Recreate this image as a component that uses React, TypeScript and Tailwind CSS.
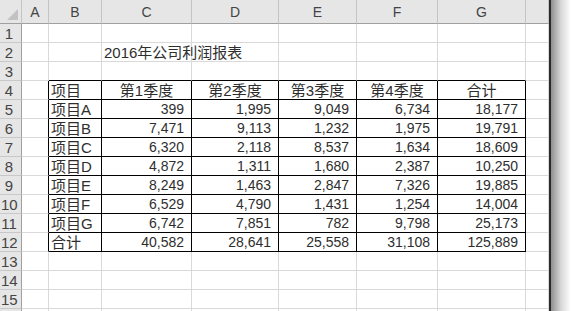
import React from "react";

const colLetters = ["", "A", "B", "C", "D", "E", "F", "G", ""];

const table: string[][] = [
  ["项目", "第1季度", "第2季度", "第3季度", "第4季度", "合计"],
  ["项目A", "399", "1,995", "9,049", "6,734", "18,177"],
  ["项目B", "7,471", "9,113", "1,232", "1,975", "19,791"],
  ["项目C", "6,320", "2,118", "8,537", "1,634", "18,609"],
  ["项目D", "4,872", "1,311", "1,680", "2,387", "10,250"],
  ["项目E", "8,249", "1,463", "2,847", "7,326", "19,885"],
  ["项目F", "6,529", "4,790", "1,431", "1,254", "14,004"],
  ["项目G", "6,742", "7,851", "782", "9,798", "25,173"],
  ["合计", "40,582", "28,641", "25,558", "31,108", "125,889"],
];

function Corner() {
  return (
    <div className="h-[24px] bg-[#e6e6e6] border-r border-b border-r-[#c4c4c4] border-b-[#a0a0a0] relative">
      <svg className="absolute right-[3px] bottom-[3px]" width="11" height="11" viewBox="0 0 11 11">
        <polygon points="11,0 11,11 0,11" fill="#c2c2c2" />
      </svg>
    </div>
  );
}

function cellContent(r: number, c: number) {
  if (r === 2 && c === 3) {
    return <span className="whitespace-nowrap pl-[2px] text-[15px]">2016年公司利润报表</span>;
  }
  if (r >= 4 && r <= 12 && c >= 2 && c <= 7) {
    const v = table[r - 4][c - 2];
    if (c === 2) return <span className="pl-[2px] whitespace-nowrap text-[15px]">{v}</span>;
    if (r === 4) return <span className="w-full text-center whitespace-nowrap text-[15px]">{v}</span>;
    return <span className="w-full text-right pr-[7px] whitespace-nowrap">{v}</span>;
  }
  return null;
}

export default function App() {
  const rows = Array.from({ length: 16 }, (_, i) => i + 1);
  return (
    <div
      className="w-[571px] h-[311px] overflow-hidden bg-white flex text-[#2e2e2e]"
      style={{ fontFamily: '"Liberation Sans", "Noto Sans CJK SC", sans-serif' }}
    >
      <div className="w-[549px] shrink-0 grid grid-cols-[22px_27px_53px_90px_87px_78px_81px_88px_23px] content-start text-[14px] leading-none">
        <Corner />
        {colLetters.slice(1).map((l, i) => (
          <div
            key={"h" + i}
            className="h-[24px] bg-[#e6e6e6] border-r border-b border-r-[#c4c4c4] border-b-[#a0a0a0] flex items-center justify-center text-[#444] pt-[1px]"
          >
            {l}
          </div>
        ))}
        {rows.map((r) => (
          <React.Fragment key={r}>
            <div className="h-[19px] bg-[#e6e6e6] border-r border-b border-r-[#a0a0a0] border-b-[#c8c8c8] flex items-center pl-[1px] text-[#444] text-[15px]">
              <span className="w-[16px] text-center">{r <= 15 ? r : ""}</span>
            </div>
            {[1, 2, 3, 4, 5, 6, 7, 8].map((c) => {
              const blackRight = r >= 4 && r <= 12 && c >= 1 && c <= 7;
              const blackBottom = r >= 3 && r <= 12 && c >= 2 && c <= 7;
              const rc = blackRight ? "border-r-[#000]" : "border-r-[#d9d9d9]";
              const bc = blackBottom ? "border-b-[#000]" : "border-b-[#d9d9d9]";
              return (
                <div
                  key={c}
                  className={`h-[19px] border-r border-b ${rc} ${bc} flex items-center min-w-0`}
                >
                  {cellContent(r, c)}
                </div>
              );
            })}
          </React.Fragment>
        ))}
      </div>
      <div className="w-[2px] h-full bg-[#2a2a2a] shrink-0" />
      <div className="flex-1 h-full bg-gradient-to-r from-[#8f8f8f] via-[#d8d8d8] to-white" />
    </div>
  );
}
